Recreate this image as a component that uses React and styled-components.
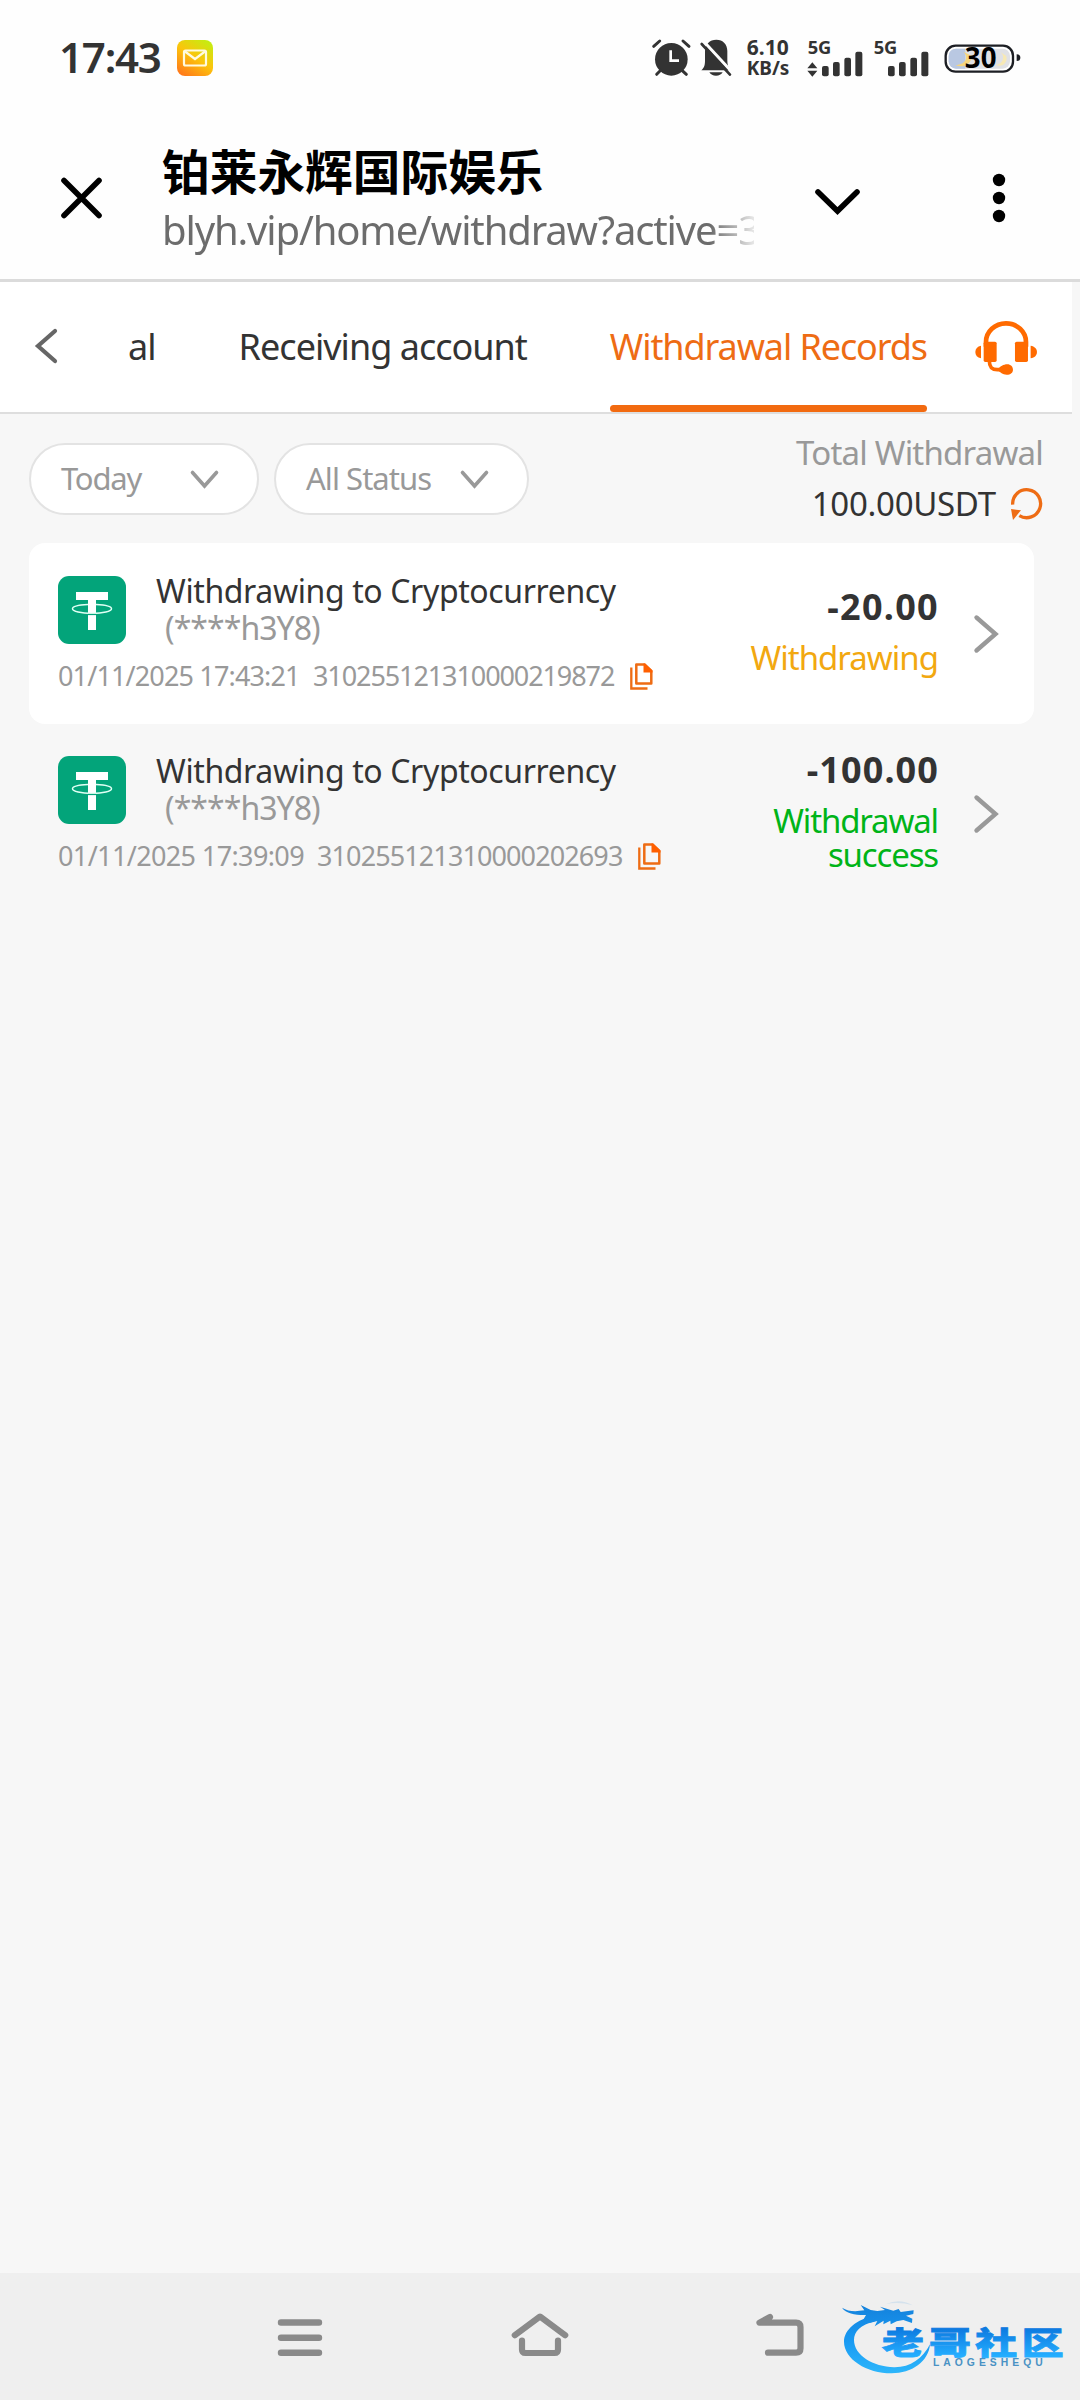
import React from "react";
import styled, { createGlobalStyle } from "styled-components";

const GlobalStyle = createGlobalStyle`
  * { box-sizing: border-box; }
  body {
    margin: 0;
    background: #f7f7f7;
    font-family: "Noto Sans", "Noto Sans CJK SC", sans-serif;
  }
  svg { display: block; flex: none; overflow: visible; }
`;

const Page = styled.div`
  position: relative;
  display: flex;
  flex-direction: column;
  width: 1080px;
  height: 2400px;
  overflow: hidden;
  background: #f7f7f7;
`;

/* ---------- status bar ---------- */

const StatusBar = styled.div`
  display: flex;
  align-items: center;
  height: 116px;
  padding: 0 59px 0 59px;
  background: #fefefe;
  color: #333;
`;

const Clock = styled.span`
  width: 118px;
  font-size: 42px;
  line-height: 50px;
  font-weight: 600;
  letter-spacing: -1.2px;
  margin-top: -2px;
`;

const StatusIcons = styled.div`
  display: flex;
  align-items: center;
  margin-left: auto;
`;

const Speed = styled.div`
  display: flex;
  flex-direction: column;
  width: 46px;
  margin: 0 14px 0 15px;
  font-weight: 700;
  line-height: 21px;
`;

const SpeedLine = styled.span`
  font-size: ${(p) => p.$size}px;
  letter-spacing: ${(p) => p.$ls || 0}px;
`;

const Spaced = styled.div`
  margin-left: ${(p) => p.$left}px;
`;

/* ---------- browser header ---------- */

const BrowserHeader = styled.header`
  display: flex;
  height: 166px;
  padding-left: 59px;
  background: #fefefe;
  border-bottom: 3px solid #dbdbdb;
`;

const HeaderIcon = styled.div`
  width: ${(p) => p.$width}px;
  padding-top: ${(p) => p.$top}px;
`;

const SiteInfo = styled.div`
  display: flex;
  flex-direction: column;
  gap: 8px;
  width: 650px;
  padding-top: 28px;
`;

const SiteTitle = styled.h1`
  margin: 0;
  font-family: "Noto Sans CJK SC", sans-serif;
  font-size: 47.7px;
  line-height: 52px;
  font-weight: 700;
  color: #000;
  white-space: nowrap;
`;

const SiteUrl = styled.div`
  width: 592px;
  overflow: hidden;
  font-size: 40px;
  line-height: 52px;
  letter-spacing: -1.13px;
  color: #6c6c6c;
  white-space: nowrap;
  -webkit-mask-image: linear-gradient(90deg, #000 548px, transparent 600px);
  mask-image: linear-gradient(90deg, #000 548px, transparent 600px);
`;

/* ---------- tabs ---------- */

const TabBar = styled.nav`
  display: flex;
  width: 1072px;
  height: 132px;
  background: #fff;
  border-bottom: 2px solid #dedede;
`;

const BackButton = styled.div`
  width: 128px;
  padding: 46px 0 0 34px;
`;

const TabStrip = styled.div`
  display: flex;
  gap: 83px;
`;

const Tab = styled.div`
  display: flex;
  flex-direction: column;
  color: ${(p) => (p.$active ? "#ee6c14" : "#333")};
`;

const TabLabel = styled.span`
  height: 123px;
  font-size: 36px;
  line-height: 129px;
  letter-spacing: ${(p) => p.$ls}px;
  white-space: nowrap;
`;

const TabUnderline = styled.div`
  height: 7px;
  border-radius: 4px;
  background: #f26a10;
`;

const Support = styled.div`
  margin-left: auto;
  padding: 38px 34px 0 0;
`;

/* ---------- filters ---------- */

const FilterBar = styled.section`
  display: flex;
  height: 129px;
  gap: 15px;
  padding: 0 37px 0 29px;
`;

const FilterPill = styled.div`
  display: flex;
  align-items: center;
  justify-content: space-between;
  width: ${(p) => p.$width}px;
  height: 72px;
  margin-top: 29px;
  padding: 0 ${(p) => p.$right}px 0 30px;
  border: 2px solid #e3e3e3;
  border-radius: 36px;
  background: #fff;
  color: #999;
  font-size: 31px;
`;

const PillLabel = styled.span`
  line-height: 40px;
  margin-top: -3px;
  letter-spacing: ${(p) => p.$ls}px;
`;

const Totals = styled.div`
  display: flex;
  flex-direction: column;
  align-items: flex-end;
  margin-left: auto;
  padding-top: 13px;
  font-size: 33px;
  line-height: 51px;
`;

const TotalLabel = styled.span`
  color: #999;
  letter-spacing: -0.8px;
`;

const TotalValue = styled.div`
  display: flex;
  align-items: center;
  gap: 14px;
  color: #333;
  letter-spacing: -0.3px;
`;

/* ---------- records ---------- */

const RecordList = styled.main`
  flex: 1;
  padding-left: 29px;
`;

const Record = styled.article`
  display: flex;
  align-items: center;
  width: 1005px;
  height: ${(p) => (p.$raised ? 181 : 179)}px;
  padding: 0 34px 0 29px;
  border-radius: 16px;
  background: ${(p) => (p.$raised ? "#fff" : "transparent")};
`;

const RecordMain = styled.div`
  align-self: flex-start;
  padding-top: ${(p) => (p.$raised ? 29 : 28)}px;
`;

const RecordHead = styled.div`
  display: flex;
  gap: 30px;
`;

const CoinIcon = styled.div`
  padding-top: 4px;
`;

const RecordTitle = styled.div`
  font-size: 32px;
  line-height: 37px;
  letter-spacing: -0.38px;
  color: #333;
`;

const RecordAccount = styled.div`
  padding-left: 9px;
  font-size: 32px;
  line-height: 37px;
  letter-spacing: -0.95px;
  color: #999;
`;

const RecordMeta = styled.div`
  display: flex;
  align-items: center;
  gap: 12px;
  margin-top: 12px;
  font-size: 27px;
  line-height: 36px;
  color: #999;
`;

const MetaText = styled.span`
  width: ${(p) => p.$width}px;
  letter-spacing: ${(p) => p.$ls}px;
  white-space: nowrap;
`;

const RecordAmount = styled.div`
  display: flex;
  flex-direction: column;
  align-items: flex-end;
  gap: 9px;
  width: 200px;
  margin-left: auto;
  margin-right: 35px;
  padding-bottom: 10px;
  text-align: right;
`;

const Amount = styled.div`
  font-size: 36px;
  line-height: 50px;
  font-weight: 700;
  letter-spacing: ${(p) => p.$ls}px;
  margin-right: -1px;
  color: #333;
`;

const StatusText = styled.div`
  font-size: 33px;
  line-height: 34px;
  letter-spacing: ${(p) => p.$ls}px;
  color: ${(p) => p.$color};
`;

/* ---------- bottom nav ---------- */

const NavBar = styled.footer`
  display: flex;
  height: 127px;
  padding: 0 180px;
  background: #efefef;
`;

const NavItem = styled.div`
  display: flex;
  flex: 1;
  align-items: center;
  justify-content: center;
`;

const Watermark = styled.div`
  position: absolute;
  left: 830px;
  top: 2290px;
`;

/* ---------- icons ---------- */

const MailIcon = () => (
  <svg width="36" height="36" viewBox="0 0 36 36">
    <defs>
      <linearGradient id="mail" x1="0.2" y1="1" x2="0.85" y2="0">
        <stop offset="0" stopColor="#ff7a1a" />
        <stop offset="0.5" stopColor="#fcc40c" />
        <stop offset="1" stopColor="#c3ee12" />
      </linearGradient>
    </defs>
    <rect width="36" height="36" rx="8" fill="url(#mail)" />
    <rect x="7" y="10.5" width="22" height="15" rx="1.5" fill="none" stroke="#fffbe0" strokeWidth="2.2" />
    <path d="M8 11.5 18 19 28 11.5" fill="none" stroke="#fffbe0" strokeWidth="2.2" />
  </svg>
);

const AlarmIcon = () => (
  <svg width="38.7" height="37.3" viewBox="36 26 116 112">
    <circle cx="94" cy="87" r="49" fill="#333" />
    <path d="M41 48 59 32M129 32 147 48M50 132 62 120M126 120 139 132" stroke="#333" strokeWidth="9" strokeLinecap="round" />
    <path d="M92 60V91H117" fill="none" stroke="#fff" strokeWidth="8" />
  </svg>
);

const BellOffIcon = () => (
  <svg width="32" height="37.3" viewBox="178 26 96 112">
    <path d="M182 120C192 112 193 102 193 90V62C193 42 207 28 227 28S260 42 260 62V90C260 102 262 112 270 120Z" fill="#333" />
    <path d="M206 126H246C242 133 235 136 226 136S210 133 206 126Z" fill="#333" />
    <path d="M188 32 274 125" stroke="#fefefe" strokeWidth="9" />
    <path d="M183 41 268 133" stroke="#333" strokeWidth="8" strokeLinecap="round" />
  </svg>
);

const SignalIcon = ({ active }) => (
  <svg width="56.7" height="38" viewBox="20 24 170 114" fill="#333">
    <text x="22" y="70" textLength="71" fontFamily="Noto Sans" fontWeight="700" fontSize="55">5G</text>
    {active && <path d="M36 94 51 112H21ZM36 137 51 119H21Z" />}
    <rect x="65" y="105" width="20" height="31" rx="6" />
    <rect x="98" y="93" width="20" height="43" rx="6" />
    <rect x="132" y="80" width="20" height="56" rx="6" />
    <rect x="165" y="62" width="21" height="74" rx="6" />
  </svg>
);

const BatteryIcon = () => (
  <svg width="77" height="29" viewBox="432 39 231 87">
    <rect x="437" y="44" width="202" height="78" rx="30" fill="#fff" stroke="#1d1f24" strokeWidth="7" />
    <rect x="446" y="53" width="184" height="60" rx="22" fill="#e0e1e5" />
    <path d="M468 53H496V113H468A22 22 0 0 1 446 91V75A22 22 0 0 1 468 53Z" fill="#b9c8e2" />
    <path d="M490 62C506 76 500 100 466 102C490 114 518 96 514 74Z" fill="#f6d57c" />
    <path d="M602 64C616 76 610 98 588 102C608 110 626 92 618 74Z" fill="#f7e9b5" />
    <path d="M650 70C658 70 661 74 661 80S658 90 650 90Z" fill="#1d1f24" />
    <text x="494" y="111" textLength="96" fontFamily="Noto Sans" fontWeight="700" fontSize="83" fill="#000">30</text>
  </svg>
);

const CloseIcon = () => (
  <svg width="44" height="44" viewBox="0 0 44 44" stroke="#000" strokeWidth="5.6" strokeLinecap="round">
    <path d="M5 4.500 40 39.500M40 4.500 5 39.500" />
  </svg>
);

const Chevron = ({ w, h, stroke, color, d }) => (
  <svg width={w} height={h} viewBox={`0 0 ${w} ${h}`} fill="none" stroke={color} strokeWidth={stroke} strokeLinecap="round">
    <path d={d} />
  </svg>
);

const MoreIcon = () => (
  <svg width="14" height="50" viewBox="0 0 14 50">
    <circle cx="7" cy="7" r="6.2" />
    <circle cx="7" cy="25" r="6.2" />
    <circle cx="7" cy="43" r="6.2" />
  </svg>
);

const HeadsetIcon = () => (
  <svg width="63.3" height="56" viewBox="45 30 190 168" fill="#ff6a00">
    <path d="M78 110V96A60 56 0 0 1 198 96V110" fill="none" stroke="#ff6a00" strokeWidth="14" />
    <rect x="71" y="95" width="39" height="61" rx="5" />
    <rect x="165" y="95" width="39" height="61" rx="5" />
    <path d="M63 107V145C52 143 46 136 46 126S52 109 63 107Z" />
    <path d="M212 107V145C224 143 231 136 231 126S224 109 212 107Z" />
    <path d="M88 152C88 172 96 179 112 179H130" fill="none" stroke="#ff6a00" strokeWidth="11" />
    <path d="M116 176C120 170 130 163 142 163C152 163 159 170 159 179S152 194 140 194C128 194 120 186 116 183Z" />
  </svg>
);

const RefreshIcon = () => (
  <svg width="33.3" height="33.3" viewBox="150 533 100 100">
    <path d="M158 586A42 42 0 1 1 178 619" fill="none" stroke="#ee6c14" strokeWidth="10" />
    <path d="M153 599 183 603 159 632Z" fill="#ee6c14" />
  </svg>
);

const TetherIcon = () => (
  <svg width="68" height="68" viewBox="0 0 68 68">
    <rect width="68" height="68" rx="11" fill="#03a47a" />
    <path d="M18 16H50V24H38V54H30V24H18Z" fill="#fff" />
    <path d="M30 28.600C20 29.100 14.500 30.600 14.500 32.800C14.500 35.400 23 37.400 34 37.400S53.500 35.400 53.500 32.800C53.500 30.600 48 29.100 38 28.600" fill="none" stroke="#e0fff4" strokeWidth="1.500" />
    <path d="M30 38.500H38" stroke="#03a47a" strokeWidth="1.200" />
  </svg>
);

const CopyIcon = () => (
  <svg width="23" height="27" viewBox="0 0 23 27">
    <path d="M6.300 1.400H14.500L21.300 8V20.600H6.300Z" fill="none" stroke="#ee6c14" strokeWidth="2.500" strokeLinejoin="round" />
    <path d="M13.500 0.500H15L22.500 7.500V9.500H13.500Z" fill="#ff5f00" />
    <path d="M1.300 4.500V25.500H17.500" fill="none" stroke="#ee6c14" strokeWidth="2.300" />
  </svg>
);

const MenuIcon = () => (
  <svg width="46" height="38" viewBox="0 0 46 38" stroke="#8a8a8a" strokeWidth="6.400" strokeLinecap="round">
    <path d="M4 4.500H42M4 19.700H42M4 34.800H42" />
  </svg>
);

const HomeIcon = () => (
  <svg width="58" height="48" viewBox="0 0 58 48" fill="none" stroke="#8a8a8a" strokeWidth="6.200" strokeLinecap="round" strokeLinejoin="round">
    <path d="M3.800 22.200 29 3.600 54.200 22.200" />
    <path d="M11 27.500V36.500Q11 40 14.500 40H43.500Q47 40 47 36.500V27.500" />
  </svg>
);

const BackIcon = () => (
  <svg width="50" height="46" viewBox="0 0 50 46" fill="none" stroke="#8a8a8a" strokeWidth="6.200" strokeLinecap="round" strokeLinejoin="round">
    <path d="M15 3 4.500 8.700H41Q45.500 8.700 45.500 13.200V34.200Q45.500 38.700 41 38.700H13" />
    <path d="M4.500 8.700 15 3V8Z" fill="#8a8a8a" strokeWidth="4" />
  </svg>
);

const LogoGlyph = ({ x, children }) => (
  <text transform={`translate(${x} 192) scale(1.35 1)`}>{children}</text>
);

const DragonLogo = () => (
  <svg width="250" height="95" viewBox="0 0 750 285">
    <defs>
      <linearGradient id="ring" gradientUnits="userSpaceOnUse" x1="0" y1="50" x2="0" y2="250">
        <stop offset="0" stopColor="#1583dd" />
        <stop offset="0.5" stopColor="#1899f2" />
        <stop offset="1" stopColor="#2db6fb" />
      </linearGradient>
      <linearGradient id="word" gradientUnits="userSpaceOnUse" x1="0" y1="-82" x2="0" y2="6">
        <stop offset="0" stopColor="#0b76de" />
        <stop offset="1" stopColor="#24aeff" />
      </linearGradient>
    </defs>
    <g fill="url(#ring)">
      <path d="M135 76C80 88 42 120 42 155C42 207 110 250 185 250C245 250 296 215 300 163C278 206 240 233 192 232C130 230 72 196 72 150C72 126 92 104 134 94Z" />
      <path d="M36 53C55 65 76 65 103 61L92 45 122 60 142 63 165 60 150 50 190 62 206 57 212 66 251 61 250 72 228 77 247 86 246 99 220 90 200 94 182 103 181 92 160 103 161 92 134 109 142 93 116 100 124 88 96 96 108 75C80 76 48 71 36 53Z" />
      <path d="M168 42Q210 24 248 46Q208 34 168 42Z" opacity="0.120" />
    </g>
    <g fill="url(#word)" stroke="url(#word)" strokeWidth="2.500" fontFamily="Noto Sans CJK SC" fontWeight="900" fontSize="93">
      <LogoGlyph x={156}>老</LogoGlyph>
      <LogoGlyph x={297}>哥</LogoGlyph>
      <LogoGlyph x={436}>社</LogoGlyph>
      <LogoGlyph x={575}>区</LogoGlyph>
    </g>
    <text x="309" y="229" textLength="329" fontFamily="Liberation Sans" fontWeight="700" fontSize="31" fill="#4a92c4">LAOGESHEQU</text>
  </svg>
);

/* ---------- data ---------- */

const records = [
  {
    raised: true,
    date: "01/11/2025 17:43:21",
    dateLs: -0.85,
    dateWidth: 243,
    id: "310255121310000219872",
    idLs: -1.1,
    idWidth: 305,
    amount: "-20.00",
    amountLs: 1.3,
    status: "Withdrawing",
    statusLs: -1,
    color: "#f2a810",
  },
  {
    raised: false,
    date: "01/11/2025 17:39:09",
    dateLs: -0.62,
    dateWidth: 247,
    id: "310255121310000202693",
    idLs: -0.9,
    idWidth: 309,
    amount: "-100.00",
    amountLs: 1.1,
    status: "Withdrawal success",
    statusLs: -1.15,
    color: "#00b418",
  },
];

const PILL_CHEVRON = "M2.500 2.500 14.500 16 26.500 2.500";

export default function App() {
  return (
    <Page>
      <GlobalStyle />
      <StatusBar>
        <Clock>17:43</Clock>
        <MailIcon />
        <StatusIcons>
          <AlarmIcon />
          <Spaced $left={8.6}><BellOffIcon /></Spaced>
          <Speed>
            <SpeedLine $size={21}>6.10</SpeedLine>
            <SpeedLine $size={19}>KB/s</SpeedLine>
          </Speed>
          <SignalIcon active />
          <Spaced $left={9.3}><SignalIcon /></Spaced>
          <Spaced $left={14.6}><BatteryIcon /></Spaced>
        </StatusIcons>
      </StatusBar>

      <BrowserHeader>
        <HeaderIcon $width={103} $top={60}><CloseIcon /></HeaderIcon>
        <SiteInfo>
          <SiteTitle>铂莱永辉国际娱乐</SiteTitle>
          <SiteUrl>blyh.vip/home/withdraw?active=3</SiteUrl>
        </SiteInfo>
        <HeaderIcon $width={180} $top={71}>
          <Chevron w={50} h={30} stroke={5.6} color="#000" d="M6 5 25.500 24 45 5" />
        </HeaderIcon>
        <HeaderIcon $width={14} $top={57}><MoreIcon /></HeaderIcon>
      </BrowserHeader>

      <TabBar>
        <BackButton>
          <Chevron w={26} h={36} stroke={4.2} color="#666" d="M21 3 4 18 21 33" />
        </BackButton>
        <TabStrip>
          <Tab><TabLabel $ls={-0.95}>al</TabLabel></Tab>
          <Tab><TabLabel $ls={-0.98}>Receiving account</TabLabel></Tab>
          <Tab $active>
            <TabLabel $ls={-1.1}>Withdrawal Records</TabLabel>
            <TabUnderline />
          </Tab>
        </TabStrip>
        <Support><HeadsetIcon /></Support>
      </TabBar>

      <FilterBar>
        <FilterPill $width={230} $right={38}>
          <PillLabel $ls={-1.2}>Today</PillLabel>
          <Chevron w={29} h={19} stroke={3.6} color="#999" d={PILL_CHEVRON} />
        </FilterPill>
        <FilterPill $width={255} $right={38}>
          <PillLabel $ls={-0.95}>All Status</PillLabel>
          <Chevron w={29} h={19} stroke={3.6} color="#999" d={PILL_CHEVRON} />
        </FilterPill>
        <Totals>
          <TotalLabel>Total Withdrawal</TotalLabel>
          <TotalValue>
            100.00USDT
            <RefreshIcon />
          </TotalValue>
        </Totals>
      </FilterBar>

      <RecordList>
        {records.map((r) => (
          <Record key={r.id} $raised={r.raised}>
            <RecordMain $raised={r.raised}>
              <RecordHead>
                <CoinIcon><TetherIcon /></CoinIcon>
                <div>
                  <RecordTitle>Withdrawing to Cryptocurrency</RecordTitle>
                  <RecordAccount>(****h3Y8)</RecordAccount>
                </div>
              </RecordHead>
              <RecordMeta>
                <MetaText $width={r.dateWidth} $ls={r.dateLs}>{r.date}</MetaText>
                <MetaText $width={r.idWidth} $ls={r.idLs}>{r.id}</MetaText>
                <CopyIcon />
              </RecordMeta>
            </RecordMain>
            <RecordAmount>
              <Amount $ls={r.amountLs}>{r.amount}</Amount>
              <StatusText $color={r.color} $ls={r.statusLs}>{r.status}</StatusText>
            </RecordAmount>
            <Chevron w={27} h={40} stroke={4.4} color="#999" d="M3.500 3.500 22.500 20 3.500 36.500" />
          </Record>
        ))}
      </RecordList>

      <NavBar>
        <NavItem><MenuIcon /></NavItem>
        <NavItem><HomeIcon /></NavItem>
        <NavItem><BackIcon /></NavItem>
      </NavBar>
      <Watermark><DragonLogo /></Watermark>
    </Page>
  );
}
